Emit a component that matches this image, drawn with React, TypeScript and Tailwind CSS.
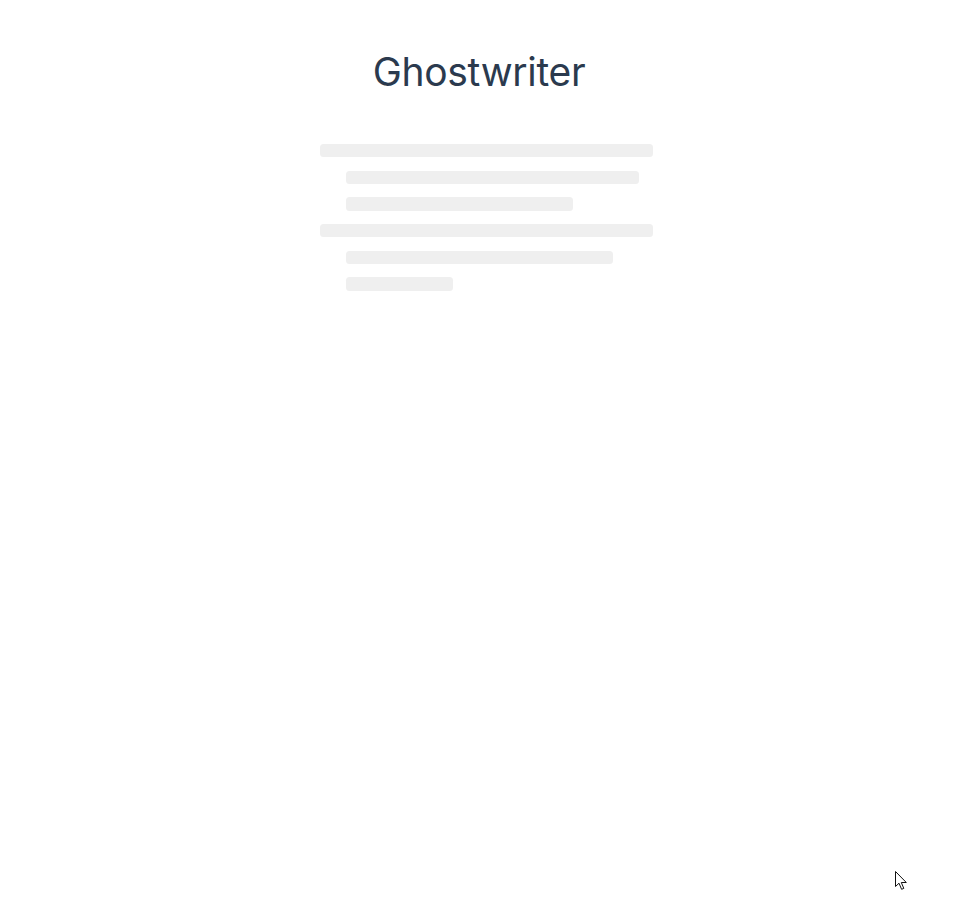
import React from 'react';

// Loading placeholder: title plus skeleton outline rows
const rows: { indent: boolean; width: string }[] = [
  { indent: false, width: 'w-[333px]' },
  { indent: true, width: 'w-[293px]' },
  { indent: true, width: 'w-[227px]' },
  { indent: false, width: 'w-[333px]' },
  { indent: true, width: 'w-[267px]' },
  { indent: true, width: 'w-[107px]' },
];

const Cursor = () => (
  <svg
    className="absolute left-[895px] top-[871px]"
    width="13"
    height="20"
    viewBox="0 0 13 20"
    fill="none"
  >
    <path
      d="M0.5 0.5 L0.5 15.5 L4 12.2 L6.6 18.3 L8.8 17.4 L6.3 11.5 L11.3 11.5 Z"
      fill="#ffffff"
      stroke="#111111"
      strokeWidth="1"
      strokeLinejoin="round"
    />
  </svg>
);

export default function App() {
  return (
    <div className="relative min-h-[920px] w-full bg-white font-['Inter','Noto_Sans',sans-serif]">
      <div className="flex flex-col items-center pt-[52px]">
        <h1 className="text-[39px] leading-[40px] font-normal tracking-[-0.3px] text-[#2b3a4e]">
          Ghostwriter
        </h1>
      </div>

      <div className="mx-auto mt-[52px] w-[350px] pl-4">
        <div className="flex flex-col gap-[13.333px]">
          {rows.map((row, i) => (
            <div
              key={i}
              className={`h-[13.333px] rounded-[3.5px] bg-[#efefef] ${row.width} ${row.indent ? 'ml-[26px]' : ''}`}
            />
          ))}
        </div>
      </div>

      <Cursor />
    </div>
  );
}
